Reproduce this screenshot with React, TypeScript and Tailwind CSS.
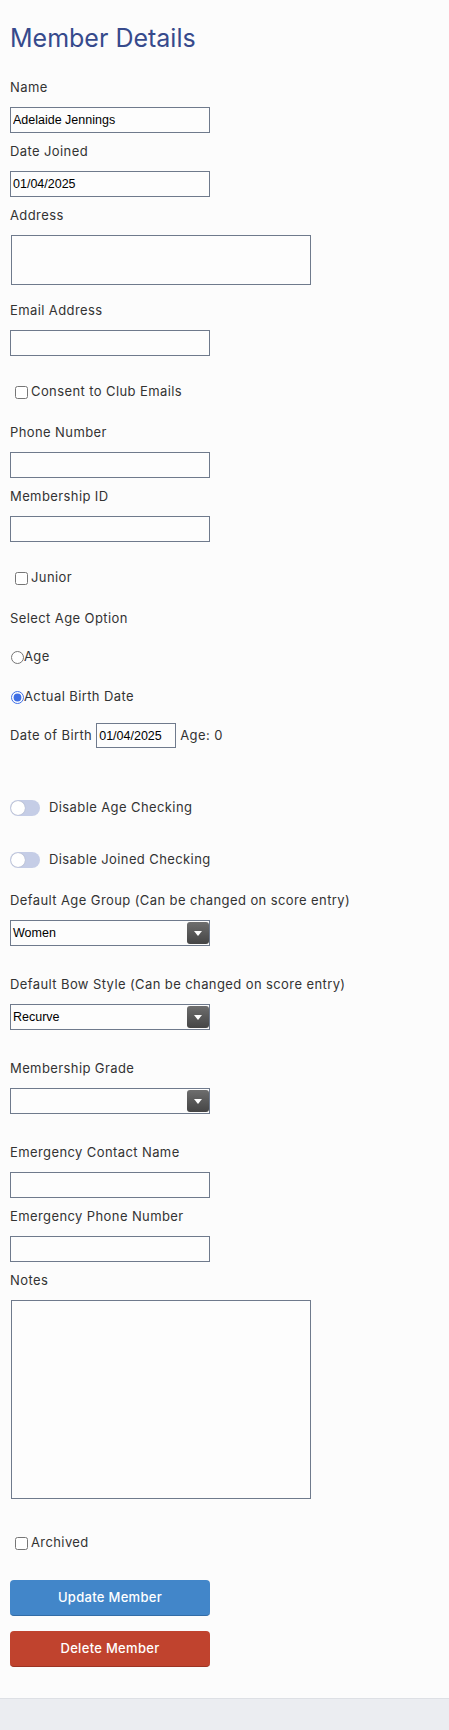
import React from "react";

const font = { fontFamily: "Inter, 'Open Sans', sans-serif" };
const lbl = "h-[20px] leading-[20px] text-[13px] tracking-[0.4px] text-[#333333] whitespace-nowrap";
const txt = "text-[13px] tracking-[0.4px] text-[#333333] whitespace-nowrap";
const inp =
  "block w-[200px] h-[26px] border border-[#6f7a8c] bg-[#fdfdfd] px-[2px] text-[12.5px] text-black outline-none font-['Liberation_Sans',Arial,sans-serif]";

function Select({ value, mt }: { value: string; mt: string }) {
  return (
    <div className={`relative w-[200px] h-[26px] border border-[#6f7a8c] bg-[#fdfdfd] ${mt}`}>
      <div className="pl-[2px] leading-[24px] text-[12.5px] text-black font-['Liberation_Sans',Arial,sans-serif]">
        {value}
      </div>
      <div className="absolute right-[0px] top-[1px] bottom-[1px] w-[22px] rounded-[3px] bg-gradient-to-b from-[#6e6e6e] to-[#454545] flex items-center justify-center">
        <svg width="8" height="5" viewBox="0 0 8 5">
          <path d="M0 0 H8 L4 5 Z" fill="#ffffff" />
        </svg>
      </div>
    </div>
  );
}

function Toggle({ label, mt }: { label: string; mt: string }) {
  return (
    <div className={`flex items-center h-[20px] ${mt}`}>
      <div className="relative w-[30px] h-[16px] rounded-full bg-[#c5cde6]">
        <div className="absolute left-[1px] top-[1px] w-[14px] h-[14px] rounded-full bg-white shadow-[0_0_1px_rgba(0,0,0,0.3)]" />
      </div>
      <span className={`ml-[9px] ${txt}`}>{label}</span>
    </div>
  );
}

function Check({ label, mt }: { label: string; mt: string }) {
  return (
    <label className={`flex items-center h-[20px] ${mt}`}>
      <input type="checkbox" className="m-0 ml-[5px] w-[13px] h-[13px]" />
      <span className={`ml-[3px] ${txt}`}>{label}</span>
    </label>
  );
}

function Radio({ label, mt, checked }: { label: string; mt: string; checked?: boolean }) {
  return (
    <label className={`flex items-center h-[20px] ${mt}`}>
      <input
        type="radio"
        name="ageopt"
        defaultChecked={checked}
        className="m-0 ml-[1px] w-[13px] h-[13px] accent-[#3f6fe4]"
      />
      <span className={txt}>{label}</span>
    </label>
  );
}

export default function App() {
  return (
    <div style={font} className="w-full min-h-[1730px] bg-[#fcfcfc] flex flex-col">
      <div className="flex flex-col items-start pl-[10px] pt-[18px] pb-[31px]">
        <h1 className="h-[40px] leading-[40px] text-[25px] text-[#364a8c] font-normal whitespace-nowrap">
          Member Details
        </h1>

        <div className={`${lbl} mt-[19px]`}>Name</div>
        <input className={`${inp} mt-[10px]`} defaultValue="Adelaide Jennings" />

        <div className={`${lbl} mt-[8px]`}>Date Joined</div>
        <input className={`${inp} mt-[10px]`} defaultValue="01/04/2025" />

        <div className={`${lbl} mt-[8px]`}>Address</div>
        <textarea className="block ml-[1px] mt-[10px] w-[300px] h-[50px] border border-[#6f7a8c] bg-[#fdfdfd] resize-none outline-none" />

        <div className={`${lbl} mt-[15px]`}>Email Address</div>
        <input className={`${inp} mt-[10px]`} />

        <Check label="Consent to Club Emails" mt="mt-[26px]" />

        <div className={`${lbl} mt-[20px]`}>Phone Number</div>
        <input className={`${inp} mt-[10px]`} />

        <div className={`${lbl} mt-[8px]`}>Membership ID</div>
        <input className={`${inp} mt-[10px]`} />

        <Check label="Junior" mt="mt-[26px]" />

        <div className={`${lbl} mt-[20px]`}>Select Age Option</div>

        <Radio label="Age" mt="mt-[19px]" />
        <Radio label="Actual Birth Date" mt="mt-[20px]" checked />

        <div className="flex items-center h-[25px] mt-[16px]">
          <span className={txt}>Date of Birth</span>
          <input
            className="ml-[4px] w-[80px] h-[25px] border border-[#6f7a8c] bg-[#fdfdfd] px-[2px] text-[12.5px] text-black outline-none font-['Liberation_Sans',Arial,sans-serif]"
            defaultValue="01/04/2025"
          />
          <span className={`ml-[4px] ${txt}`}>Age: 0</span>
        </div>

        <Toggle label="Disable Age Checking" mt="mt-[50px]" />
        <Toggle label="Disable Joined Checking" mt="mt-[32px]" />

        <div className={`${lbl} mt-[20px]`}>Default Age Group (Can be changed on score entry)</div>
        <Select value="Women" mt="mt-[10px]" />

        <div className={`${lbl} mt-[28px]`}>Default Bow Style (Can be changed on score entry)</div>
        <Select value="Recurve" mt="mt-[10px]" />

        <div className={`${lbl} mt-[28px]`}>Membership Grade</div>
        <Select value="" mt="mt-[10px]" />

        <div className={`${lbl} mt-[28px]`}>Emergency Contact Name</div>
        <input className={`${inp} mt-[10px]`} />

        <div className={`${lbl} mt-[8px]`}>Emergency Phone Number</div>
        <input className={`${inp} mt-[10px]`} />

        <div className={`${lbl} mt-[8px]`}>Notes</div>
        <textarea className="block ml-[1px] mt-[10px] w-[300px] h-[199px] border border-[#6f7a8c] bg-[#fdfdfd] resize-none outline-none" />

        <Check label="Archived" mt="mt-[34px]" />

        <button className="mt-[27px] w-[200px] h-[36px] rounded-[4px] bg-[#4286c9] border-b border-[#326ca6] text-white text-[13px] tracking-[0.3px] font-medium">
          Update Member
        </button>
        <button className="mt-[15px] w-[200px] h-[36px] rounded-[4px] bg-[#c0432e] border-b border-[#9c3323] text-white text-[13px] tracking-[0.3px] font-medium">
          Delete Member
        </button>
      </div>
      <div className="h-[32px] bg-[#ebedf1] border-t border-[#dde0e5]" />
    </div>
  );
}
